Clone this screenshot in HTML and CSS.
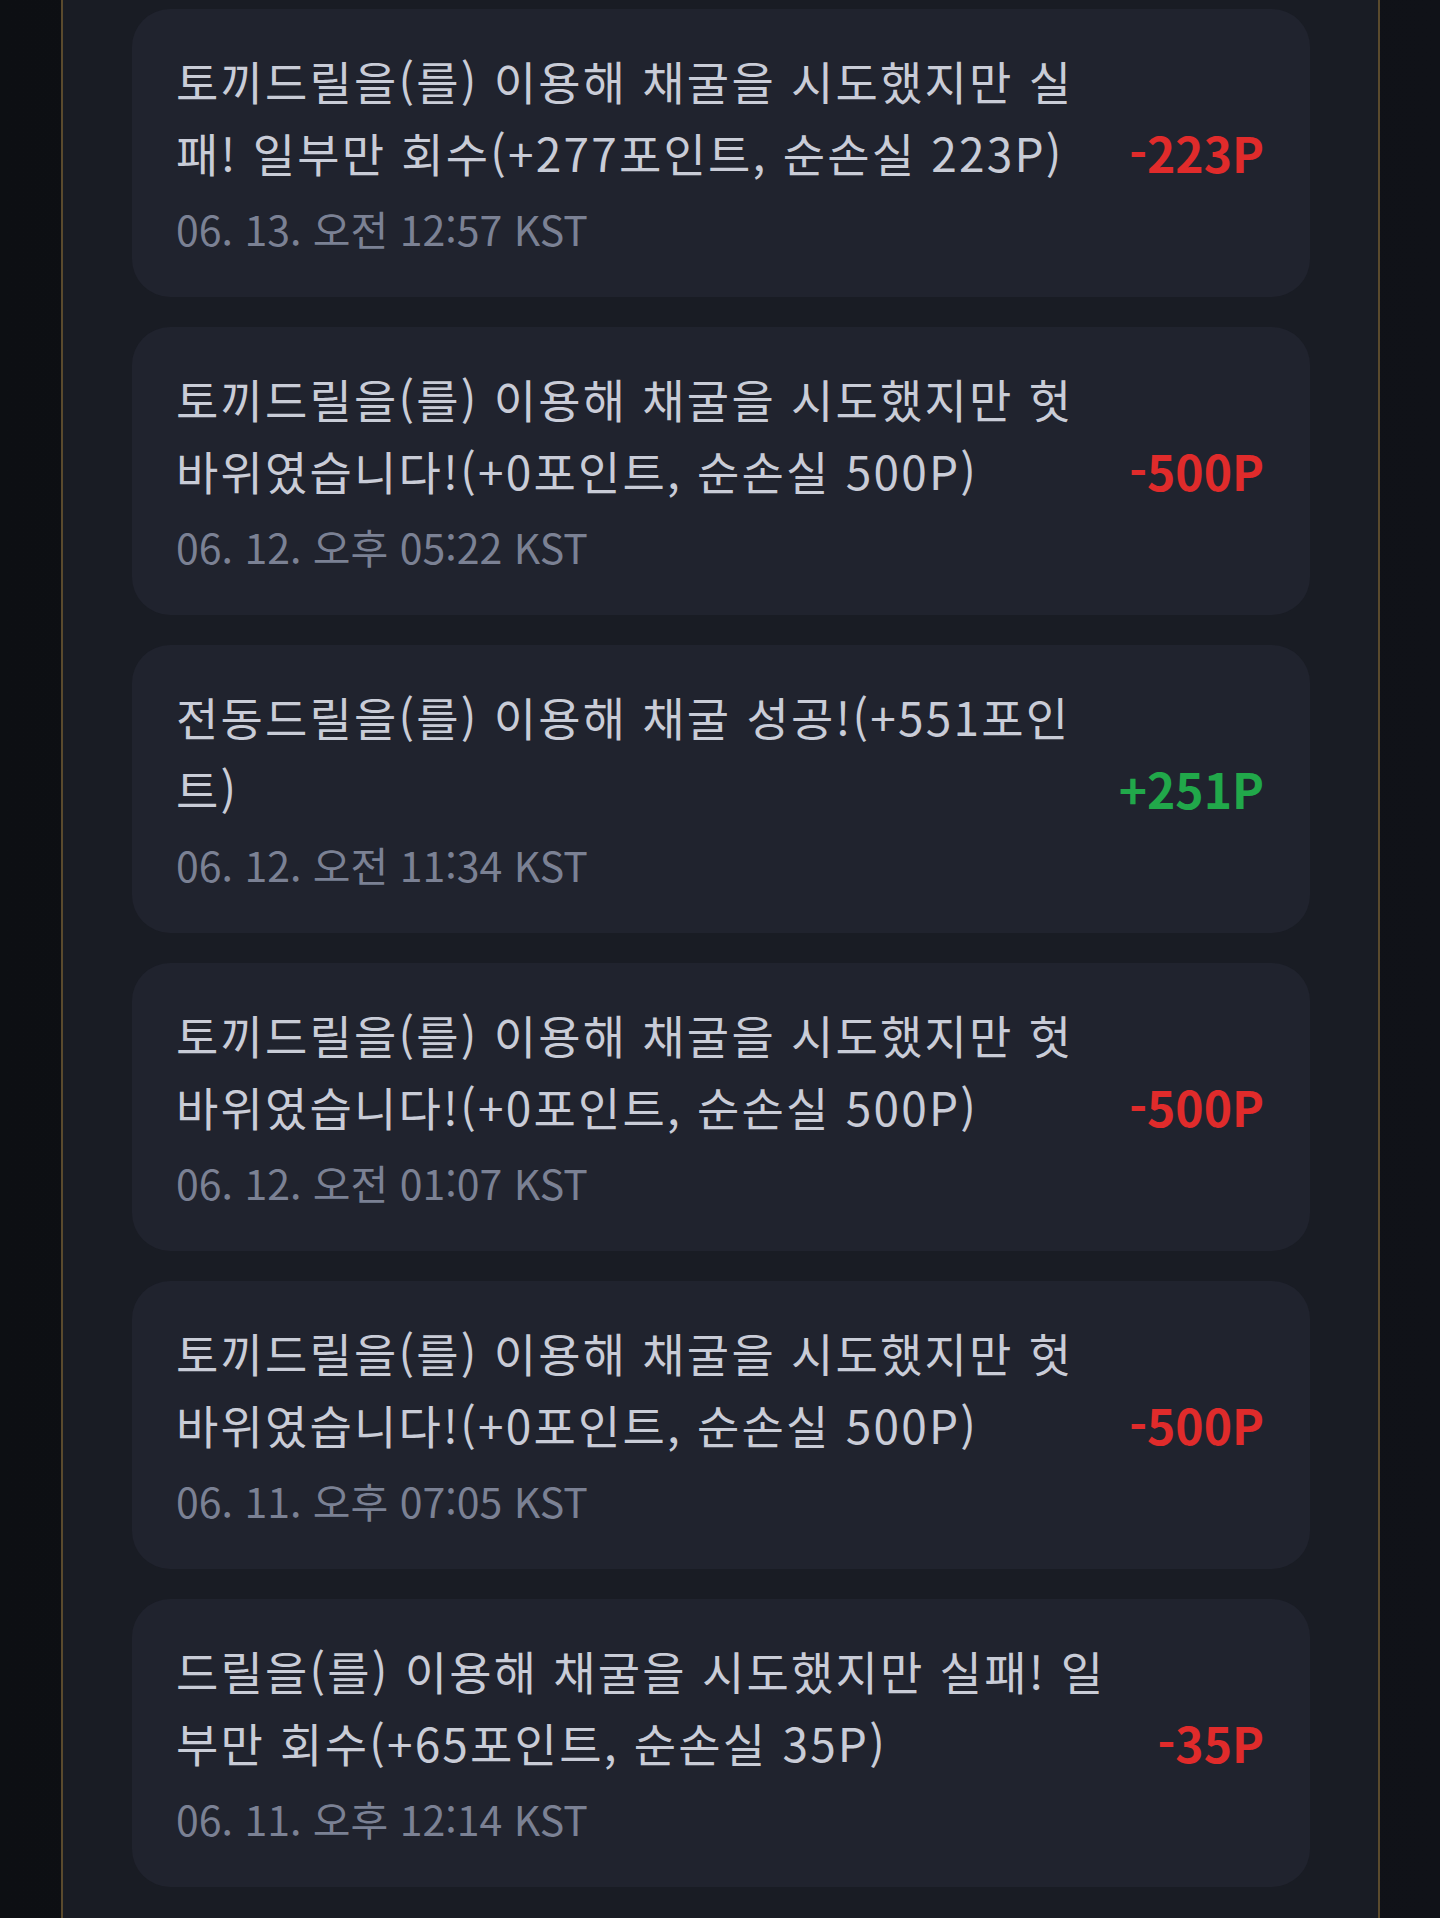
FILE: index.html
```html
<!DOCTYPE html>
<html lang="ko">
<head>
<meta charset="utf-8">
<title>채굴 기록</title>
<link rel="stylesheet" href="styles.css">
</head>
<body>
<div class="page">
  <section class="panel">
    <ul class="log">
      <li class="entry">
        <div class="info">
          <p class="msg">토끼드릴을(를) 이용해 채굴을 시도했지만 실패! 일부만 회수(+277포인트, 순손실 223P)</p>
          <p class="time">06. 13. 오전 12:57 KST</p>
        </div>
        <span class="amount loss">-223P</span>
      </li>
      <li class="entry">
        <div class="info">
          <p class="msg">토끼드릴을(를) 이용해 채굴을 시도했지만 헛바위였습니다!(+0포인트, 순손실 500P)</p>
          <p class="time">06. 12. 오후 05:22 KST</p>
        </div>
        <span class="amount loss">-500P</span>
      </li>
      <li class="entry">
        <div class="info">
          <p class="msg">전동드릴을(를) 이용해 채굴 성공!(+551포인트)</p>
          <p class="time">06. 12. 오전 11:34 KST</p>
        </div>
        <span class="amount gain">+251P</span>
      </li>
      <li class="entry">
        <div class="info">
          <p class="msg">토끼드릴을(를) 이용해 채굴을 시도했지만 헛바위였습니다!(+0포인트, 순손실 500P)</p>
          <p class="time">06. 12. 오전 01:07 KST</p>
        </div>
        <span class="amount loss">-500P</span>
      </li>
      <li class="entry">
        <div class="info">
          <p class="msg">토끼드릴을(를) 이용해 채굴을 시도했지만 헛바위였습니다!(+0포인트, 순손실 500P)</p>
          <p class="time">06. 11. 오후 07:05 KST</p>
        </div>
        <span class="amount loss">-500P</span>
      </li>
      <li class="entry">
        <div class="info">
          <p class="msg">드릴을(를) 이용해 채굴을 시도했지만 실패! 일부만 회수(+65포인트, 순손실 35P)</p>
          <p class="time">06. 11. 오후 12:14 KST</p>
        </div>
        <span class="amount loss">-35P</span>
      </li>
    </ul>
  </section>
</div>
</body>
</html>
```

FILE: styles.css
```css
* { box-sizing: border-box; }
html, body {
  margin: 0;
  padding: 0;
  background: #0d0f13;
  font-family: "Noto Sans CJK KR", "Noto Sans", sans-serif;
}
.page {
  min-height: 1918px;
  padding: 0 60px 0 61px;
  background: linear-gradient(90deg, #0d0f13 0%, #101218 100%);
}
.panel {
  min-height: 1918px;
  border-left: 2px solid #5a4a2d;
  border-right: 2px solid #5a4a2d;
  background: #191c24;
  padding: 9px 68px 0 69px;
}
.log {
  list-style: none;
  margin: 0;
  padding: 0;
  display: flex;
  flex-direction: column;
  gap: 30px;
}
.entry {
  display: flex;
  align-items: center;
  justify-content: space-between;
  gap: 24px;
  background: #20232e;
  border-radius: 38px;
  padding: 35px 46px 36px 44px;
  height: 288px;
}
.info {
  flex: 1;
  min-width: 0;
  align-self: flex-start;
}
.msg {
  margin: 0;
  max-width: 935px;
  font-size: 46px;
  line-height: 72px;
  letter-spacing: 2.2px;
  word-break: break-all;
  color: #c9ccd7;
}
.time {
  margin: 12px 0 0;
  font-size: 41px;
  line-height: 56px;
  color: #7b8194;
}
.amount {
  flex: none;
  font-size: 48px;
  font-weight: 700;
  line-height: 1;
  margin-bottom: 2px;
}
.loss { color: #e02b2b; }
.gain { color: #21a84a; }
```
